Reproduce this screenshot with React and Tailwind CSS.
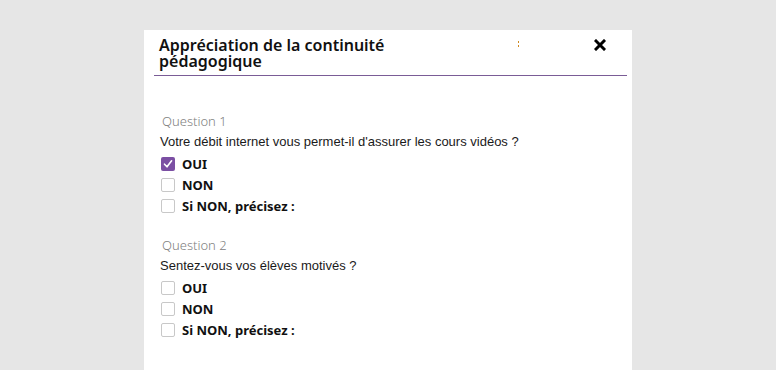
const questions = [
  { id: 1, label: 'Question 1', text: "Votre débit internet vous permet-il d'assurer les cours vidéos ?", checked: 'OUI' },
  { id: 2, label: 'Question 2', text: 'Sentez-vous vos élèves motivés ?', checked: null },
];

const options = ['OUI', 'NON', 'Si NON, précisez :'];

function Checkbox({ checked }) {
  if (checked) {
    return (
      <span className="flex h-[14px] w-[14px] shrink-0 items-center justify-center rounded-[2px] bg-[#7b4fa3]">
        <svg width="10" height="10" viewBox="0 0 10 10" fill="none">
          <path d="M1.5 5.2 L4 7.8 L8.6 1.8" stroke="white" strokeWidth="1.6" strokeLinecap="round" strokeLinejoin="round" />
        </svg>
      </span>
    );
  }
  return <span className="h-[14px] w-[14px] shrink-0 rounded-[2px] border border-[#c8c8c8] bg-white" />;
}

export default function App() {
  return (
    <div className="h-[370px] w-[776px] overflow-hidden bg-[#e6e6e6] pt-[30px]">
      <div className="ml-[144px] h-[340px] w-[488px] bg-white">
        <div className="relative ml-[10px] mr-[5px] border-b border-[#7a5c96] pb-[6px] pt-[7px]">
          <h2 className="w-[300px] pl-[5px] text-[16px] font-semibold leading-[16px] text-[#111]" style={{ fontFamily: '"Noto Sans", sans-serif' }}>
            Appréciation de la continuité pédagogique
          </h2>
          <span className="absolute left-[364px] top-[11px] flex flex-col gap-[2px]">
            <span className="h-[2px] w-[1px] bg-[#d08a20]" />
            <span className="h-[2px] w-[1px] bg-[#d08a20]" />
          </span>
          <svg className="absolute left-[440px] top-[9px]" width="12" height="12" viewBox="0 0 12 12">
            <path d="M2 2 L10 10 M10 2 L2 10" stroke="#000" strokeWidth="3" strokeLinecap="square" />
          </svg>
        </div>
        <div className="px-[16px] pt-[37px]">
          {questions.map((q) => (
            <div key={q.id} className="mb-[24px]">
              <div className="pl-[2px] text-[13px] font-light leading-[16px] text-[#808080]" style={{ fontFamily: '"Noto Sans", sans-serif' }}>
                {q.label}
              </div>
              <div className="mt-[5px] text-[13px] leading-[16px] text-[#1a1a1a]" style={{ fontFamily: '"Liberation Sans", Arial, sans-serif' }}>
                {q.text}
              </div>
              <div className="mt-[7px] flex flex-col gap-[7px] pl-[1px]">
                {options.map((o) => (
                  <label key={o} className="flex h-[14px] items-center gap-[7px]">
                    <Checkbox checked={q.checked === o} />
                    <span className="text-[13px] font-bold leading-[14px] text-[#111]" style={{ fontFamily: '"Noto Sans", sans-serif' }}>
                      {o}
                    </span>
                  </label>
                ))}
              </div>
            </div>
          ))}
        </div>
      </div>
    </div>
  );
}
